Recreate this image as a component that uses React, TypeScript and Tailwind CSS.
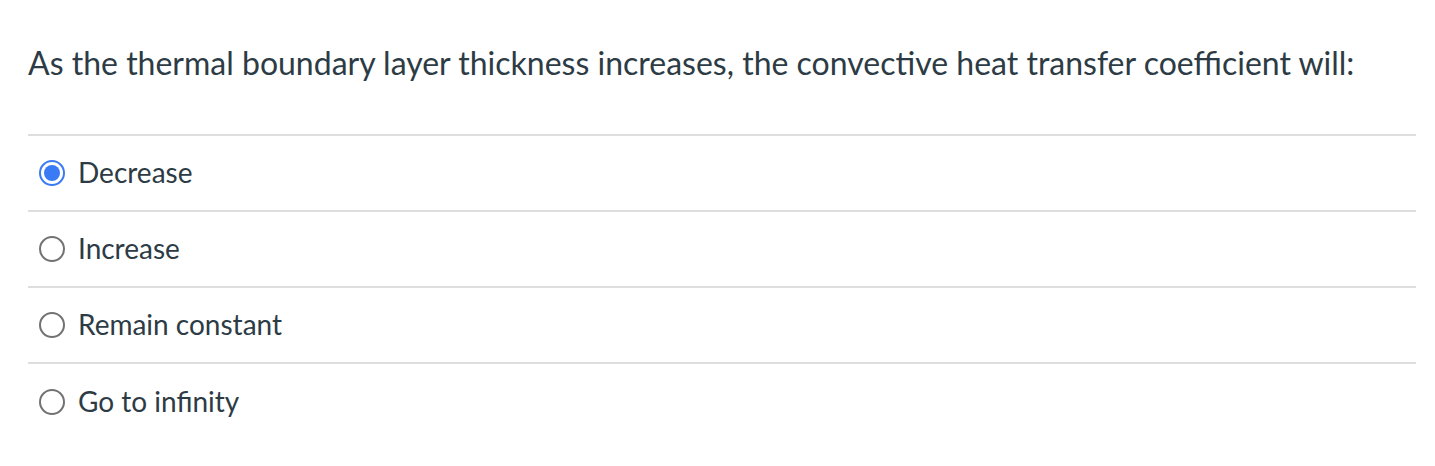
const options = [
  { label: "Decrease", selected: true },
  { label: "Increase", selected: false },
  { label: "Remain constant", selected: false },
  { label: "Go to infinity", selected: false },
];

function Radio({ selected }: { selected: boolean }) {
  if (selected) {
    return (
      <span className="flex h-[26px] w-[26px] shrink-0 items-center justify-center rounded-full border-2 border-[#3a7af5] bg-white">
        <span className="h-[16px] w-[16px] rounded-full bg-[#3a7af5]" />
      </span>
    );
  }
  return <span className="h-[26px] w-[26px] shrink-0 rounded-full border-2 border-[#727272] bg-white" />;
}

export default function App() {
  return (
    <div className="h-[466px] w-full bg-white pl-[28px] pr-[19px] pt-[39px] text-[#2d3b45]" style={{ fontFamily: "Lato, 'Noto Sans', sans-serif" }}>
      <h1 className="text-[32px] leading-[48px] font-normal">
        As the thermal boundary layer thickness increases, the convective heat transfer coefficient will:
      </h1>
      <div className="mt-[47px] border-t-2 border-[#dedede]">
        {options.map((o) => (
          <label key={o.label} className="flex h-[76px] items-center gap-[13px] border-b-2 border-[#dedede] pl-[11px] last:border-b-0">
            <Radio selected={o.selected} />
            <span className="text-[28px] leading-none pb-[2px]">{o.label}</span>
          </label>
        ))}
      </div>
    </div>
  );
}
